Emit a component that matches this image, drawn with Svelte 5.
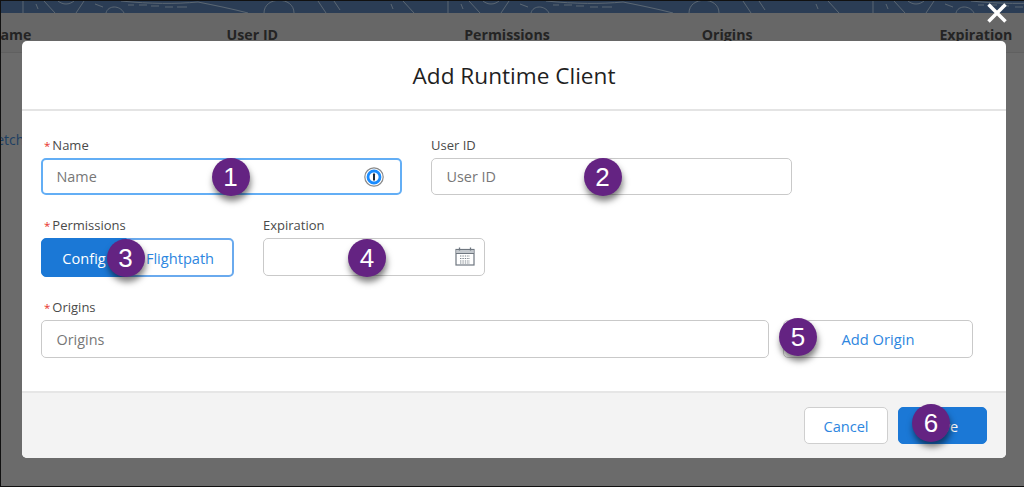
<script lang="ts">
	const columns = ['Name', 'User ID', 'Permissions', 'Origins', 'Expiration'];

	const badges = [
		{ n: 1, x: 230.5, y: 177 },
		{ n: 2, x: 602.5, y: 177 },
		{ n: 3, x: 125.5, y: 258 },
		{ n: 4, x: 367, y: 258 },
		{ n: 5, x: 798, y: 337 },
		{ n: 6, x: 931, y: 423 }
	];
</script>

<div class="page">
	<svg class="banner" width="100%" height="12" aria-hidden="true">
		<defs>
			<pattern id="topo" width="425" height="12" patternUnits="userSpaceOnUse">
				<path
					d="M22 0V12M35 3l2 5M43 0l11 12M57 0c5 4 11 4 16 0M83 0l-8 12M94 3l8 3M105 12c2-8 14-8 18 0M127 4h6M138 4h8M150 5h8M164 6h8M176 6h10M120 0c30 3 55 3 77 1c15 3 35 7 50 11M263 12c0-17 30-17 30 0M317 0l8 12M333 0l6 9M390 3l2 5M402 0l11 12"
					fill="none"
					stroke="#5a6672"
					stroke-width="1"
				/>
			</pattern>
		</defs>
		<rect width="100%" height="12" fill="url(#topo)" />
	</svg>

	<div class="table-head">
		{#each columns as col}
			<span>{col}</span>
		{/each}
	</div>
	<a class="row-link" href="#fetch">Fetch</a>

	<div class="overlay">
		<div class="modal">
			<header class="modal-header">
				<h2>Add Runtime Client</h2>
			</header>

			<div class="modal-body">
				<div class="row">
					<div class="field wide">
						<span class="label"><i>*</i>Name</span>
						<div class="input focused">
							<span class="placeholder">Name</span>
							<svg class="pw-icon" width="20" height="20" viewBox="0 0 20 20" aria-hidden="true">
								<circle cx="10" cy="10" r="9.2" fill="#fff" stroke="#8a8a8a" stroke-width="1.2" />
								<circle cx="10" cy="10" r="6" fill="#fff" stroke="#1a8cff" stroke-width="2.8" />
								<rect x="9" y="6.2" width="2" height="7.6" rx="1" fill="#1d2a3a" />
							</svg>
						</div>
					</div>
					<div class="field wide">
						<span class="label">User ID</span>
						<div class="input">
							<span class="placeholder">User ID</span>
						</div>
					</div>
				</div>

				<div class="row">
					<div class="field">
						<span class="label"><i>*</i>Permissions</span>
						<div class="toggle">
							<button class="toggle-on">Config</button>
							<button class="toggle-off">Flightpath</button>
						</div>
					</div>
					<div class="field">
						<span class="label">Expiration</span>
						<div class="input date">
							<svg width="20" height="19" viewBox="0 0 20 19" aria-hidden="true">
								<rect x="1" y="2.5" width="18" height="15.5" fill="#fff" stroke="#6f7780" stroke-width="1.2" />
								<rect x="1.5" y="3" width="17" height="3.5" fill="#c3c8cd" />
								<path d="M1 6.5h18" stroke="#6f7780" stroke-width="1" />
								<path d="M4.5 0.5v3M15.5 0.5v3" stroke="#6f7780" stroke-width="1.3" />
								<path
									d="M5 9h10M5 11.5h10M5 14h10M5 16h10"
									stroke="#7d858d"
									stroke-width="1.2"
									stroke-dasharray="1.4 1"
								/>
							</svg>
						</div>
					</div>
				</div>

				<div class="row origins">
					<div class="field origin-field">
						<span class="label"><i>*</i>Origins</span>
						<div class="input">
							<span class="placeholder">Origins</span>
						</div>
					</div>
					<button class="add-origin">Add Origin</button>
				</div>
			</div>

			<footer class="modal-footer">
				<button class="btn cancel">Cancel</button>
				<button class="btn save">Save</button>
			</footer>
		</div>

		<svg class="close" width="22" height="22" viewBox="0 0 22 22" aria-label="Close">
			<path d="M2.5 2.5l17 17M19.5 2.5l-17 17" stroke="#fff" stroke-width="3.5" />
		</svg>

		{#each badges as b}
			<span class="badge" style="left: {b.x}px; top: {b.y}px">{b.n}</span>
		{/each}
	</div>
</div>

<style>
	:global(body) {
		margin: 0;
	}

	.page {
		position: relative;
		box-sizing: border-box;
		width: 1024px;
		height: 487px;
		overflow: hidden;
		border: 1px solid #111;
		border-right: 0;
		background: #6b6b6b;
		font-family: 'Open Sans', sans-serif;
	}

	.banner {
		display: block;
		background: #2b3d55;
	}

	.table-head {
		display: grid;
		box-sizing: border-box;
		grid-template-columns: repeat(5, 237.6px);
		height: 40px;
		padding-top: 3px;
		margin-left: -12px;
		align-items: center;
		border-bottom: 1px solid #606060;
		background: #676767;
		font-size: 14.2px;
		font-weight: 700;
		color: #242424;
		white-space: nowrap;
	}

	.row-link {
		display: block;
		margin: 77px 0 0 -12px;
		font-size: 14px;
		color: #1d3f63;
		text-decoration: none;
	}

	.overlay {
		position: absolute;
		inset: -1px 0 0 -1px;
	}

	.modal {
		position: absolute;
		left: 22px;
		top: 41px;
		display: flex;
		flex-direction: column;
		width: 984px;
		height: 417px;
		border-radius: 5px;
		overflow: hidden;
		background: #fff;
	}

	.modal-header {
		display: flex;
		box-sizing: border-box;
		align-items: center;
		justify-content: center;
		flex: none;
		height: 70px;
		border-bottom: 2px solid #e4e4e4;
	}

	h2 {
		margin: 0;
		font-size: 22.6px;
		font-weight: 400;
		color: #1f1f1f;
	}

	.modal-body {
		display: flex;
		flex: 1;
		flex-direction: column;
		gap: 21px;
		padding: 25px 19px 0;
	}

	.row {
		display: flex;
		gap: 29px;
	}

	.origins {
		gap: 14px;
		align-items: flex-end;
	}

	.field {
		display: flex;
		flex-direction: column;
		gap: 4px;
	}

	.wide {
		width: 361px;
	}

	.wide .input {
		height: 37px;
	}

	.origin-field {
		width: 728px;
	}

	.label {
		height: 18px;
		font-size: 13px;
		line-height: 18px;
		color: #4a4a4a;
	}

	.label i {
		margin: 0 2px 0 3px;
		font-size: 11.5px;
		font-style: normal;
		color: #e8312a;
	}

	.input {
		display: flex;
		box-sizing: border-box;
		align-items: center;
		justify-content: space-between;
		height: 38px;
		padding: 0 14px 0 14.5px;
		border: 1px solid #c9c9c9;
		border-radius: 5px;
		background: #fff;
	}

	.input.focused {
		border: 2px solid #63aef5;
		padding: 0 16px 0 13.5px;
	}

	.pw-icon {
		flex: none;
	}

	.placeholder {
		font-size: 14.4px;
		color: #777;
	}

	.date {
		justify-content: flex-end;
		width: 222px;
		padding-right: 9px;
	}

	.date svg {
		margin-bottom: 2px;
	}

	.toggle {
		display: flex;
		width: 193px;
		height: 39px;
	}

	.toggle button {
		font-family: inherit;
		font-size: 14.6px;
		padding: 0;
		cursor: pointer;
	}

	.toggle-on {
		width: 86px;
		border: 1px solid #1b78d6;
		border-radius: 5px 0 0 5px;
		background: #1b78d6;
		color: #fff;
	}

	.toggle-off {
		flex: 1;
		border: 2px solid #6aaaee;
		border-left-width: 1px;
		border-radius: 0 5px 5px 0;
		background: #fff;
		color: #2d86e0;
	}

	.add-origin {
		width: 190px;
		height: 38px;
		border: 1px solid #c9c9c9;
		border-radius: 5px;
		background: #fff;
		font-family: inherit;
		font-size: 14.7px;
		color: #2d86e0;
	}

	.modal-footer {
		display: flex;
		flex: none;
		box-sizing: border-box;
		height: 67px;
		justify-content: flex-end;
		align-items: flex-start;
		gap: 10px;
		padding: 14px 19px 0 0;
		border-top: 2px solid #e6e6e6;
		background: #f3f3f3;
	}

	.btn {
		height: 37px;
		border-radius: 5px;
		font-family: inherit;
		font-size: 14.6px;
	}

	.cancel {
		width: 84px;
		border: 1px solid #cfcfcf;
		background: #fff;
		color: #2d86e0;
	}

	.save {
		width: 89px;
		border: 1px solid #1b78d6;
		background: #1b78d6;
		color: #fff;
	}

	.close {
		position: absolute;
		left: 986px;
		top: 2px;
	}

	.badge {
		position: absolute;
		display: flex;
		align-items: center;
		justify-content: center;
		width: 38px;
		height: 38px;
		margin: -19px 0 0 -19px;
		border-radius: 50%;
		background: #642382;
		box-shadow: 1px 5px 6px rgba(0, 0, 0, 0.5);
		font-family: 'Liberation Sans', Arial, sans-serif;
		font-size: 26px;
		color: #fff;
	}
</style>
